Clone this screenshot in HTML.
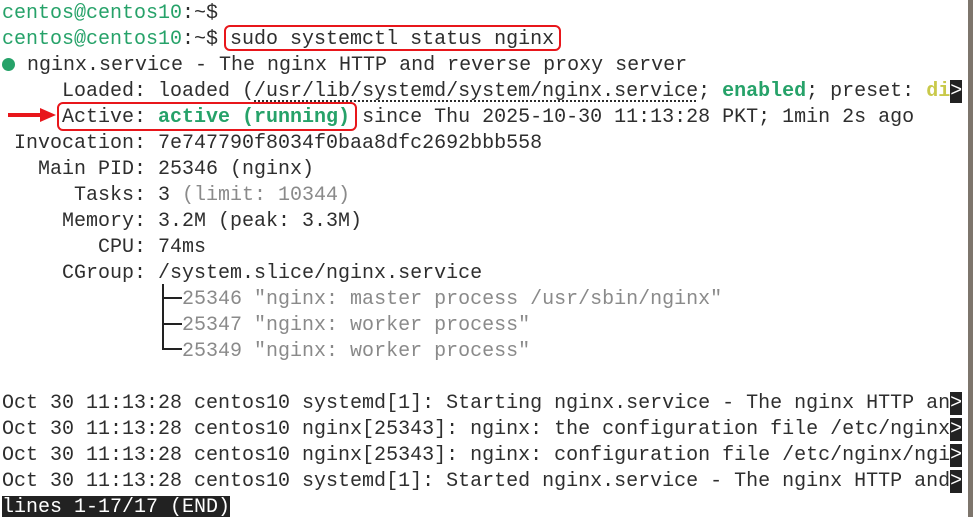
<!DOCTYPE html>
<html><head><meta charset="utf-8"><style>
html,body{margin:0;padding:0;background:#fff;width:973px;height:517px;overflow:hidden;position:relative}
pre{margin:0;position:absolute;left:2px;top:1px;font-family:"Liberation Mono","DejaVu Sans Mono",monospace;font-size:20px;line-height:26px;color:#2e2e2e;white-space:pre}
.g{color:#26a269}
.b{font-weight:bold;color:#26a269}
.y{font-weight:bold;color:#c9c94a}
.m{color:#8a8a8a}
.i{background:#222;color:#fff}
.u{text-decoration:underline dotted;text-underline-offset:4px}
.box{position:absolute;border:2px solid #e8161b;border-radius:6px;box-sizing:border-box}
.strip{position:absolute;right:0;top:0;width:5px;height:517px;background:#7d756c}
.dot{display:inline-block;width:13px;height:13px;border-radius:50%;background:#26a269;vertical-align:-1px}
</style></head><body>
<pre><span class="g">centos@centos10</span>:~$
<span class="g">centos@centos10</span>:~$ sudo systemctl status nginx
<span class="dot"></span> nginx.service - The nginx HTTP and reverse proxy server
     Loaded: loaded (<span class="u">/usr/lib/systemd/system/nginx.service</span>; <span class="b">enabled</span>; preset: <span class="y">di</span><span class="i">&gt;</span>
     Active: <span class="b">active (running)</span> since Thu 2025-10-30 11:13:28 PKT; 1min 2s ago
 Invocation: 7e747790f8034f0baa8dfc2692bbb558
   Main PID: 25346 (nginx)
      Tasks: 3 <span class="m">(limit: 10344)</span>
     Memory: 3.2M (peak: 3.3M)
        CPU: 74ms
     CGroup: /system.slice/nginx.service
               <span class="m">25346 "nginx: master process /usr/sbin/nginx"</span>
               <span class="m">25347 "nginx: worker process"</span>
               <span class="m">25349 "nginx: worker process"</span>

Oct 30 11:13:28 centos10 systemd[1]: Starting nginx.service - The nginx HTTP an<span class="i">&gt;</span>
Oct 30 11:13:28 centos10 nginx[25343]: nginx: the configuration file /etc/nginx<span class="i">&gt;</span>
Oct 30 11:13:28 centos10 nginx[25343]: nginx: configuration file /etc/nginx/ngi<span class="i">&gt;</span>
Oct 30 11:13:28 centos10 systemd[1]: Started nginx.service - The nginx HTTP and<span class="i">&gt;</span>
<span class="i">lines 1-17/17 (END)</span></pre>
<svg style="position:absolute;left:158px;top:284px" width="26" height="72"><path d="M5 0V66M5 14H24M5 40H24M5 65H24" stroke="#222" stroke-width="2" fill="none"/></svg>
<div class="box" style="left:224px;top:25px;width:337px;height:26px"></div>
<div class="box" style="left:57px;top:102px;width:300px;height:29px"></div>
<svg style="position:absolute;left:6px;top:106px" width="52" height="18"><line x1="2" y1="9" x2="36" y2="9" stroke="#e8161b" stroke-width="4"/><polygon points="34,2 50,9 34,16" fill="#e8161b"/></svg>
<div class="strip"></div>
</body></html>
